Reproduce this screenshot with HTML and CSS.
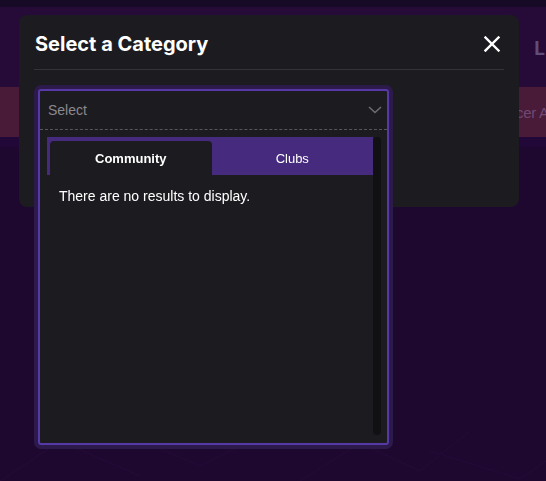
FILE: index.html
```html
<!DOCTYPE html>
<html lang="en">
<head>
<meta charset="utf-8">
<title>Select a Category</title>
<link rel="stylesheet" href="styles.css">
</head>
<body>
<div class="page">
  <div class="topbar"></div>
  <div class="hero"><span class="nav-l">L</span></div>
  <div class="band"><span class="band-text">cer A</span></div>
  <div class="strip"></div>
  <div class="rest">
    <svg class="pattern" width="546" height="50" viewBox="0 0 546 50">
      <path d="M0 50 L60 10 L140 45 M120 0 L200 35 L260 5 M300 50 L360 12 L420 40 L470 0 M430 20 L520 48 L546 30" fill="none" stroke="#250b39" stroke-width="1"/>
    </svg>
  </div>
</div>

<div class="overlay">
  <div class="modal">
    <div class="modal-header">
      <h2 class="modal-title">Select a Category</h2>
      <svg class="close" width="16" height="16" viewBox="0 0 16 16">
        <path d="M1.5 1.5 L14.5 14.5 M14.5 1.5 L1.5 14.5" stroke="#ffffff" stroke-width="2.4" stroke-linecap="square"/>
      </svg>
    </div>
    <div class="modal-body">
      <div class="dropdown">
        <div class="select-head">
          <span class="placeholder">Select</span>
          <svg class="chevron" width="14" height="8" viewBox="0 0 14 8">
            <path d="M1 1 L7 6.5 L13 1" fill="none" stroke="#6c6c70" stroke-width="1.6"/>
          </svg>
        </div>
        <div class="menu">
          <div class="menu-content">
            <div class="tabs">
              <div class="tab active">Community</div>
              <div class="tab">Clubs</div>
            </div>
            <p class="empty">There are no results to display.</p>
          </div>
          <div class="scrollbar"></div>
        </div>
      </div>
    </div>
  </div>
</div>
</body>
</html>
```

FILE: styles.css
```css
* { box-sizing: border-box; }

html, body {
  margin: 0;
  padding: 0;
  width: 546px;
  height: 481px;
  overflow: hidden;
  background: #1f0830;
  font-family: "Liberation Sans", Arial, sans-serif;
}

.page {
  display: flex;
  flex-direction: column;
  height: 481px;
}

.topbar {
  height: 7px;
  background: #160a27;
}

.hero {
  height: 80px;
  background: #260b39;
  display: flex;
  justify-content: flex-end;
  padding-right: 1px;
}

.nav-l {
  font-family: Inter, sans-serif;
  font-weight: 700;
  font-size: 19px;
  color: #5f4d7a;
  margin-top: 30px;
}

.band {
  height: 50px;
  background: #4a1a39;
  display: flex;
  align-items: center;
  padding-left: 516px;
  white-space: nowrap;
  overflow: hidden;
}

.band-text {
  font-size: 15px;
  letter-spacing: -0.3px;
  color: #6e4a72;
}

.strip {
  height: 10px;
  background: #220838;
}

.rest {
  flex: 1;
  background: #1f0830;
  display: flex;
  align-items: flex-end;
}

.pattern { display: block; }

.overlay {
  position: fixed;
  inset: 0;
  padding: 15px 0 0 19px;
}

.modal {
  width: 500px;
  height: 192px;
  background: #1c1b20;
  border-radius: 8px;
  padding: 0 15px;
}

.modal-header {
  height: 55px;
  border-bottom: 1px solid #333237;
  display: flex;
  align-items: center;
  justify-content: space-between;
  padding: 3px 4px 0 1px;
}

.modal-title {
  margin: 0;
  font-family: Inter, "Noto Sans", sans-serif;
  font-size: 20px;
  font-weight: 700;
  color: #ffffff;
}

.close { display: block; }

.modal-body {
  padding-top: 19px;
  padding-left: 4px;
}

.dropdown {
  width: 351px;
  height: 356px;
  border: 2px solid #5638a6;
  border-radius: 3px;
  box-shadow: 0 0 0 4px #2c1a4b;
  background: #1c1b20;
  display: flex;
  flex-direction: column;
}

.select-head {
  height: 39px;
  border-bottom: 1px dashed #57565c;
  display: flex;
  align-items: center;
  justify-content: space-between;
  padding: 0 5px 0 8px;
}

.placeholder {
  font-size: 14px;
  color: #8a898e;
}

.chevron { display: block; }

.menu {
  flex: 1;
  display: flex;
  padding: 7px 6px 8px 7px;
}

.menu-content {
  flex: 1;
}

.tabs {
  display: flex;
  height: 38px;
  background: #452a7e;
  padding: 4px 0 0 3px;
}

.tab {
  flex: 1;
  display: flex;
  align-items: center;
  justify-content: center;
  font-size: 13px;
  color: #ffffff;
}

.tab.active {
  background: #1c1b20;
  border-radius: 4px 4px 0 0;
  font-weight: 700;
}

.empty {
  margin: 11px 0 0 12px;
  font-size: 14px;
  line-height: 20px;
  color: #ffffff;
}

.scrollbar {
  width: 8px;
  background: #111114;
  border-radius: 4px;
}
```
